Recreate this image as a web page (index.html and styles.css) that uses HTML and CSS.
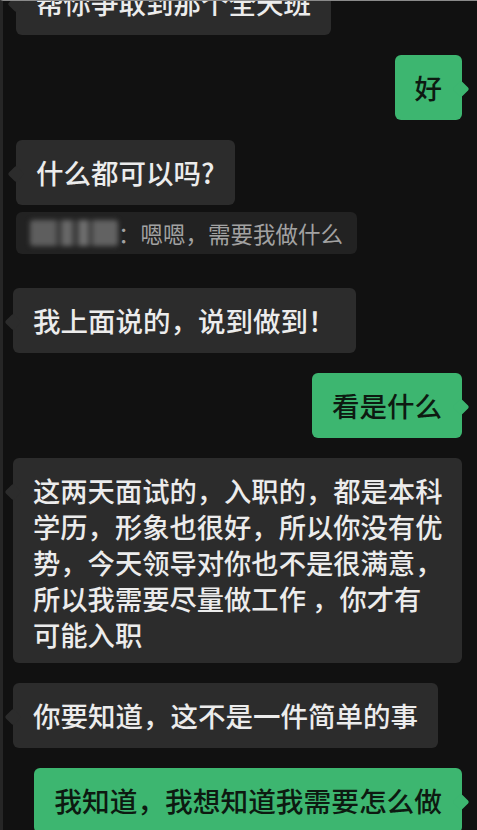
FILE: index.html
```html
<!DOCTYPE html>
<html lang="zh-CN">
<head>
<meta charset="utf-8">
<title>聊天记录</title>
<link rel="stylesheet" href="styles.css">
</head>
<body>
<div class="screen">
  <div class="chat">
    <div class="row in shift">
      <div class="bubble">帮你争取到那个全天班</div>
    </div>
    <div class="row out">
      <div class="bubble green">好</div>
    </div>
    <div class="group shift">
      <div class="bubble">什么都可以吗?</div>
      <div class="quote"><span class="blurname"></span><span class="qtext">：嗯嗯，需要我做什么</span></div>
    </div>
    <div class="row in">
      <div class="bubble">我上面说的，说到做到！</div>
    </div>
    <div class="row out">
      <div class="bubble green">看是什么</div>
    </div>
    <div class="row in">
      <div class="bubble long">这两天面试的，入职的，都是本科学历，形象也很好，所以你没有优势，今天领导对你也不是很满意，所以我需要尽量做工作 ，你才有可能入职</div>
    </div>
    <div class="row in">
      <div class="bubble">你要知道，这不是一件简单的事</div>
    </div>
    <div class="row out">
      <div class="bubble green wide">我知道，我想知道我需要怎么做</div>
    </div>
  </div>
</div>
</body>
</html>
```
FILE: styles.css
```css
html, body {
  margin: 0;
  padding: 0;
  background: #111111;
}

body {
  width: 477px;
  height: 830px;
  overflow: hidden;
  font-family: "Noto Sans CJK SC", "Noto Sans", sans-serif;
}

.screen {
  height: 830px;
  box-sizing: border-box;
  border-left: 3px solid #262626;
  border-top: 1px solid #8a8a8a;
  overflow: hidden;
}

.chat {
  display: flex;
  flex-direction: column;
  gap: 20px;
  margin-top: -31px;
  padding: 0 15px 0 10px;
}

.row {
  display: flex;
}

.row.in {
  justify-content: flex-start;
}

.row.out {
  justify-content: flex-end;
}

.shift {
  margin-left: 3px;
}

.group {
  display: flex;
  flex-direction: column;
  align-items: flex-start;
  gap: 7px;
  margin-bottom: 14px;
}

.bubble {
  position: relative;
  background: #2c2c2c;
  color: #ececec;
  border-radius: 6px;
  padding: 14px 20px 15px;
  font-size: 27.5px;
  line-height: 36px;
  font-weight: 500;
  word-break: break-all;
}

.bubble::before {
  content: "";
  position: absolute;
  top: 28px;
  left: -6px;
  width: 12px;
  height: 12px;
  background: inherit;
  border-radius: 2px;
  transform: rotate(45deg);
}

.bubble.green {
  background: #3db670;
  color: #0d1a11;
}

.bubble.green::before {
  left: auto;
  right: -5px;
}

.bubble.long {
  font-size: 27.3px;
  padding: 14px 18px 11px 20px;
}

.bubble.wide {
  font-size: 27.7px;
}

.quote {
  display: flex;
  align-items: center;
  background: #222222;
  border-radius: 6px;
  padding: 6px 14px;
  font-size: 22.5px;
  line-height: 30px;
  color: #a2a2a2;
}

.blurname {
  display: inline-block;
  width: 88px;
  height: 26px;
  background: linear-gradient(90deg,
    #5e5e5e 0 30%,
    #3c3c3c 30% 36%,
    #686868 36% 48%,
    #3c3c3c 48% 56%,
    #6e6e6e 56% 66%,
    #404040 66% 72%,
    #626262 72% 100%);
  filter: blur(2.5px);
  border-radius: 3px;
}

.qtext {
  white-space: nowrap;
}
```
